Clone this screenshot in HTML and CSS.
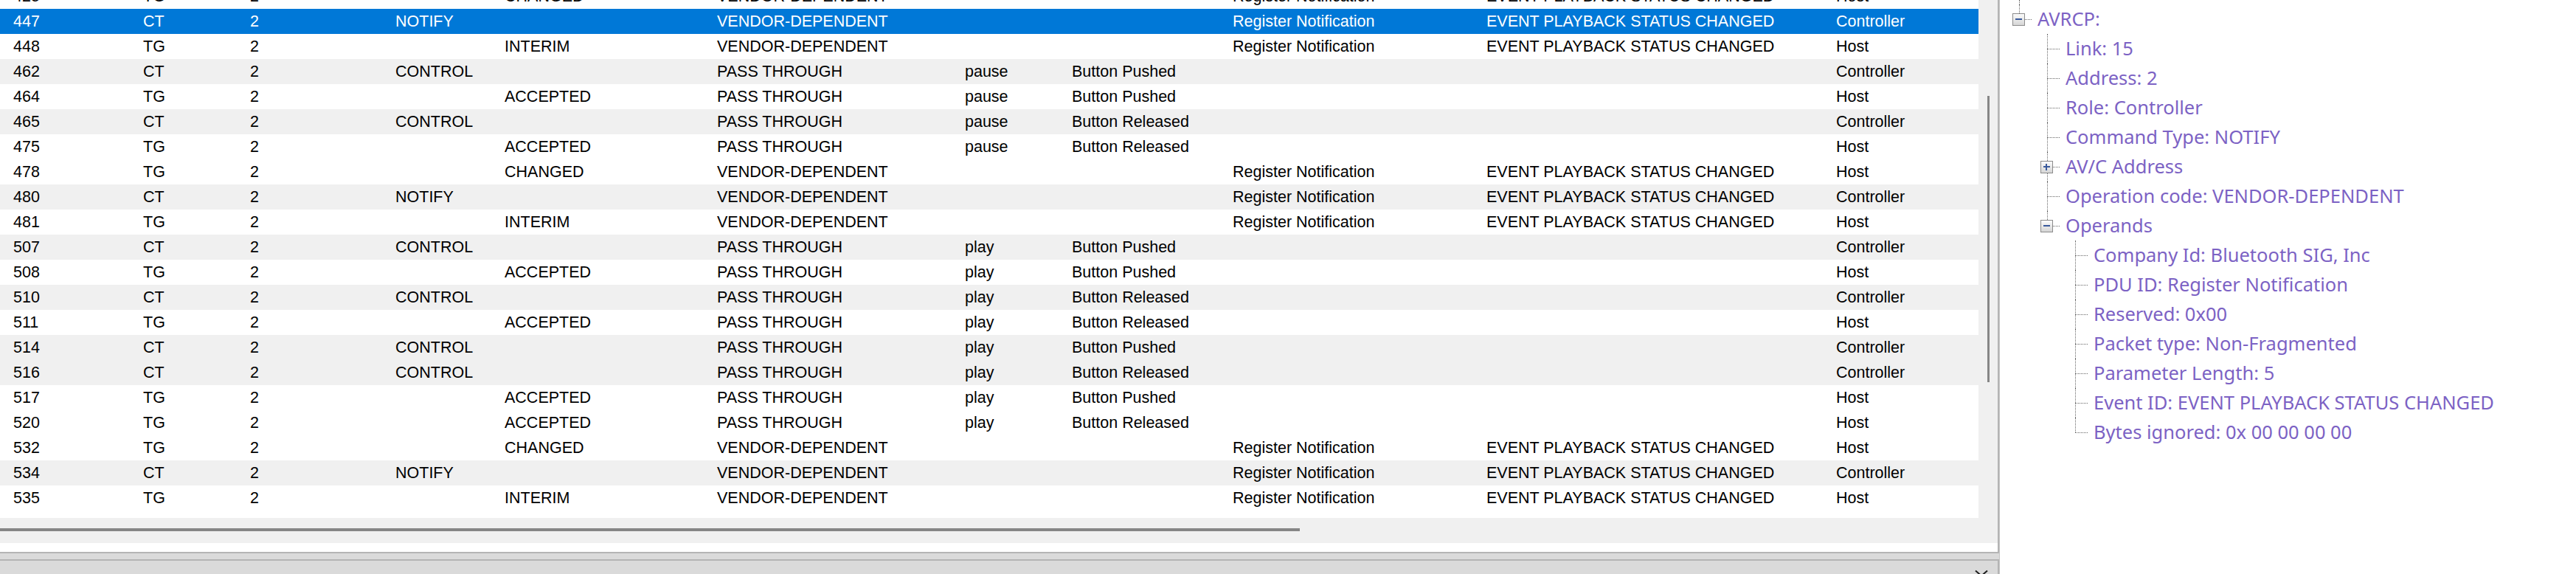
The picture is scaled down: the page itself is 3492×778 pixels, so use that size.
FILE: index.html
```html
<!DOCTYPE html>
<html>
<head>
<meta charset="utf-8">
<link rel="stylesheet" href="styles.css">
</head>
<body>
<div class="app">
  <div class="left">
    <div class="list-panel">
      <div class="rows">
        <div class="row tg"><span>425</span><span>TG</span><span>2</span><span></span><span>CHANGED</span><span>VENDOR-DEPENDENT</span><span></span><span></span><span>Register Notification</span><span>EVENT PLAYBACK STATUS CHANGED</span><span>Host</span></div>
        <div class="row ct sel"><span>447</span><span>CT</span><span>2</span><span>NOTIFY</span><span></span><span>VENDOR-DEPENDENT</span><span></span><span></span><span>Register Notification</span><span>EVENT PLAYBACK STATUS CHANGED</span><span>Controller</span></div>
        <div class="row tg"><span>448</span><span>TG</span><span>2</span><span></span><span>INTERIM</span><span>VENDOR-DEPENDENT</span><span></span><span></span><span>Register Notification</span><span>EVENT PLAYBACK STATUS CHANGED</span><span>Host</span></div>
        <div class="row ct"><span>462</span><span>CT</span><span>2</span><span>CONTROL</span><span></span><span>PASS THROUGH</span><span>pause</span><span>Button Pushed</span><span></span><span></span><span>Controller</span></div>
        <div class="row tg"><span>464</span><span>TG</span><span>2</span><span></span><span>ACCEPTED</span><span>PASS THROUGH</span><span>pause</span><span>Button Pushed</span><span></span><span></span><span>Host</span></div>
        <div class="row ct"><span>465</span><span>CT</span><span>2</span><span>CONTROL</span><span></span><span>PASS THROUGH</span><span>pause</span><span>Button Released</span><span></span><span></span><span>Controller</span></div>
        <div class="row tg"><span>475</span><span>TG</span><span>2</span><span></span><span>ACCEPTED</span><span>PASS THROUGH</span><span>pause</span><span>Button Released</span><span></span><span></span><span>Host</span></div>
        <div class="row tg"><span>478</span><span>TG</span><span>2</span><span></span><span>CHANGED</span><span>VENDOR-DEPENDENT</span><span></span><span></span><span>Register Notification</span><span>EVENT PLAYBACK STATUS CHANGED</span><span>Host</span></div>
        <div class="row ct"><span>480</span><span>CT</span><span>2</span><span>NOTIFY</span><span></span><span>VENDOR-DEPENDENT</span><span></span><span></span><span>Register Notification</span><span>EVENT PLAYBACK STATUS CHANGED</span><span>Controller</span></div>
        <div class="row tg"><span>481</span><span>TG</span><span>2</span><span></span><span>INTERIM</span><span>VENDOR-DEPENDENT</span><span></span><span></span><span>Register Notification</span><span>EVENT PLAYBACK STATUS CHANGED</span><span>Host</span></div>
        <div class="row ct"><span>507</span><span>CT</span><span>2</span><span>CONTROL</span><span></span><span>PASS THROUGH</span><span>play</span><span>Button Pushed</span><span></span><span></span><span>Controller</span></div>
        <div class="row tg"><span>508</span><span>TG</span><span>2</span><span></span><span>ACCEPTED</span><span>PASS THROUGH</span><span>play</span><span>Button Pushed</span><span></span><span></span><span>Host</span></div>
        <div class="row ct"><span>510</span><span>CT</span><span>2</span><span>CONTROL</span><span></span><span>PASS THROUGH</span><span>play</span><span>Button Released</span><span></span><span></span><span>Controller</span></div>
        <div class="row tg"><span>511</span><span>TG</span><span>2</span><span></span><span>ACCEPTED</span><span>PASS THROUGH</span><span>play</span><span>Button Released</span><span></span><span></span><span>Host</span></div>
        <div class="row ct"><span>514</span><span>CT</span><span>2</span><span>CONTROL</span><span></span><span>PASS THROUGH</span><span>play</span><span>Button Pushed</span><span></span><span></span><span>Controller</span></div>
        <div class="row ct"><span>516</span><span>CT</span><span>2</span><span>CONTROL</span><span></span><span>PASS THROUGH</span><span>play</span><span>Button Released</span><span></span><span></span><span>Controller</span></div>
        <div class="row tg"><span>517</span><span>TG</span><span>2</span><span></span><span>ACCEPTED</span><span>PASS THROUGH</span><span>play</span><span>Button Pushed</span><span></span><span></span><span>Host</span></div>
        <div class="row tg"><span>520</span><span>TG</span><span>2</span><span></span><span>ACCEPTED</span><span>PASS THROUGH</span><span>play</span><span>Button Released</span><span></span><span></span><span>Host</span></div>
        <div class="row tg"><span>532</span><span>TG</span><span>2</span><span></span><span>CHANGED</span><span>VENDOR-DEPENDENT</span><span></span><span></span><span>Register Notification</span><span>EVENT PLAYBACK STATUS CHANGED</span><span>Host</span></div>
        <div class="row ct"><span>534</span><span>CT</span><span>2</span><span>NOTIFY</span><span></span><span>VENDOR-DEPENDENT</span><span></span><span></span><span>Register Notification</span><span>EVENT PLAYBACK STATUS CHANGED</span><span>Controller</span></div>
        <div class="row tg"><span>535</span><span>TG</span><span>2</span><span></span><span>INTERIM</span><span>VENDOR-DEPENDENT</span><span></span><span></span><span>Register Notification</span><span>EVENT PLAYBACK STATUS CHANGED</span><span>Host</span></div>
      </div>
      <div class="vscroll"><div class="vthumb"></div></div>
      <div class="hscroll"><div class="hthumb"></div></div>
      <div class="pad"></div>
    </div>
    <div class="bottom-panel">
      <svg class="chev" width="18" height="10" viewBox="0 0 18 10"><path d="M1 1.5 L9 8.5 L17 1.5" fill="none" stroke="#1e1e1e" stroke-width="2"/></svg>
    </div>
  </div>
  <div class="tree">
    <div class="tnode stub"><div class="guide line"></div></div>
    <div class="tnode"><div class="conn last"><span class="box minus"></span></div><span class="label">AVRCP:</span></div>
    <div class="tnode"><div class="guide"></div><div class="conn"></div><span class="label">Link: 15</span></div>
    <div class="tnode"><div class="guide"></div><div class="conn"></div><span class="label">Address: 2</span></div>
    <div class="tnode"><div class="guide"></div><div class="conn"></div><span class="label">Role: Controller</span></div>
    <div class="tnode"><div class="guide"></div><div class="conn"></div><span class="label">Command Type: NOTIFY</span></div>
    <div class="tnode"><div class="guide"></div><div class="conn"><span class="box plus"></span></div><span class="label">AV/C Address</span></div>
    <div class="tnode"><div class="guide"></div><div class="conn"></div><span class="label">Operation code: VENDOR-DEPENDENT</span></div>
    <div class="tnode"><div class="guide"></div><div class="conn last"><span class="box minus"></span></div><span class="label">Operands</span></div>
    <div class="tnode"><div class="guide"></div><div class="guide"></div><div class="conn"></div><span class="label">Company Id: Bluetooth SIG, Inc</span></div>
    <div class="tnode"><div class="guide"></div><div class="guide"></div><div class="conn"></div><span class="label">PDU ID: Register Notification</span></div>
    <div class="tnode"><div class="guide"></div><div class="guide"></div><div class="conn"></div><span class="label">Reserved: 0x00</span></div>
    <div class="tnode"><div class="guide"></div><div class="guide"></div><div class="conn"></div><span class="label">Packet type: Non-Fragmented</span></div>
    <div class="tnode"><div class="guide"></div><div class="guide"></div><div class="conn"></div><span class="label">Parameter Length: 5</span></div>
    <div class="tnode"><div class="guide"></div><div class="guide"></div><div class="conn"></div><span class="label">Event ID: EVENT PLAYBACK STATUS CHANGED</span></div>
    <div class="tnode"><div class="guide"></div><div class="guide"></div><div class="conn last"></div><span class="label">Bytes ignored: 0x 00 00 00 00</span></div>
  </div>
</div>
</body>
</html>
```
FILE: styles.css
```css
html, body {
  margin: 0;
  padding: 0;
}
body {
  width: 3492px;
  height: 778px;
  overflow: hidden;
  background: #dadada;
  font-family: "Liberation Sans", Arial, sans-serif;
}
.app {
  display: flex;
  height: 778px;
}
.left {
  width: 2710px;
  flex: none;
  display: flex;
  flex-direction: column;
  gap: 8px;
}
.list-panel {
  height: 750px;
  flex: none;
  box-sizing: border-box;
  border-right: 2px solid #b4b4b4;
  border-bottom: 2px solid #b4b4b4;
  background: #fff;
  display: grid;
  grid-template-columns: 2682px 26px;
  grid-template-rows: 702px 34px 12px;
}
.rows {
  grid-column: 1;
  grid-row: 1;
  overflow: hidden;
}
.row {
  display: grid;
  grid-template-columns: 176px 145px 197px 148px 288px 336px 145px 218px 344px 474px 1fr;
  padding-left: 18px;
  height: 34px;
  line-height: 34px;
  font-size: 21.5px;
  color: #000;
  white-space: nowrap;
}
.row:first-child {
  margin-top: -22px;
}
.row.ct {
  background: #f0f0f0;
}
.row.sel {
  background: #0078d7;
  color: #fff;
}
.vscroll {
  grid-column: 2;
  grid-row: 1 / 3;
  background: #f0f0f0;
  padding-left: 12px;
  padding-top: 130px;
}
.vthumb {
  width: 3px;
  height: 388px;
  background: #868686;
}
.hscroll {
  grid-column: 1;
  grid-row: 2;
  background: #f0f0f0;
  padding-top: 14px;
}
.hthumb {
  width: 1762px;
  height: 4px;
  background: #868686;
}
.pad {
  grid-column: 1 / 3;
  grid-row: 3;
  background: #fff;
}
.bottom-panel {
  flex: 1;
  border-top: 2px solid #b4b4b4;
  border-right: 2px solid #b4b4b4;
  display: flex;
  justify-content: flex-end;
  align-items: flex-start;
  padding: 12px 13px 0 0;
}
.chev {
  display: block;
}
.tree {
  flex: 1;
  background: #fff;
  border-left: 1px solid #c4c4c4;
  padding-left: 7px;
  font-family: "Noto Sans", "Liberation Sans", sans-serif;
  font-size: 25.5px;
  color: #7c62c4;
}
.tnode {
  display: flex;
  align-items: center;
  height: 40px;
  white-space: nowrap;
}
.tnode.stub {
  height: 6px;
}
.guide, .conn {
  flex: none;
  width: 38px;
  height: 100%;
  position: relative;
}
.guide.line::before {
  content: "";
  position: absolute;
  left: 19px;
  top: 0;
  bottom: 0;
  border-left: 1px dotted #666;
}
.conn::before {
  content: "";
  position: absolute;
  left: 19px;
  top: 0;
  bottom: 0;
  border-left: 1px dotted #666;
}
.conn.last::before {
  bottom: 50%;
}
.conn::after {
  content: "";
  position: absolute;
  left: 19px;
  width: 17px;
  top: 50%;
  border-top: 1px dotted #666;
}
.box {
  position: absolute;
  left: 10px;
  top: 12px;
  width: 17px;
  height: 17px;
  box-sizing: border-box;
  border: 1px solid #8c8c8c;
  background: linear-gradient(#fbfbfb, #d6d6d6);
  z-index: 1;
}
.box::before {
  content: "";
  position: absolute;
  left: 3px;
  top: 6px;
  width: 9px;
  height: 2px;
  background: #3a5a9c;
}
.box.plus::after {
  content: "";
  position: absolute;
  left: 6px;
  top: 3px;
  width: 2px;
  height: 9px;
  background: #3a5a9c;
}
.label {
  margin-left: 6px;
  padding-bottom: 3px;
}
```
